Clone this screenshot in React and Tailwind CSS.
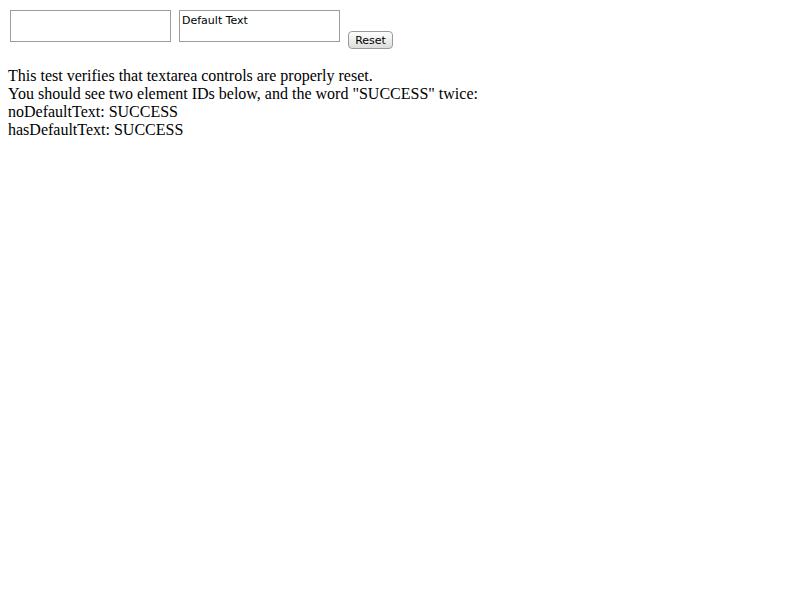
export default function App() {
  return (
    <div className="min-h-screen bg-white p-2 font-['Liberation_Serif',serif] text-black">
      {/* form row */}
      <div className="flex items-start">
        <textarea
          className="mt-[2px] ml-[2px] h-[32px] w-[161px] resize-none border border-[#9c9c9c] px-[2px] pt-[3px] pb-[1px] font-['DejaVu_Sans',sans-serif] text-[11px] leading-[13px] outline-none"
          defaultValue=""
        />
        <textarea
          className="mt-[2px] ml-[8px] h-[32px] w-[161px] resize-none border border-[#9c9c9c] px-[2px] pt-[3px] pb-[1px] font-['DejaVu_Sans',sans-serif] text-[11px] leading-[13px] outline-none"
          defaultValue="Default Text"
        />
        <button className="mt-[23px] ml-[8px] flex h-[18px] w-[45px] items-center justify-center rounded-[4px] border border-[#9a9a9a] bg-gradient-to-b from-white to-[#dcdcdc] font-['DejaVu_Sans',sans-serif] text-[11px] leading-none text-black">
          Reset
        </button>
      </div>

      {/* results */}
      <div className="mt-[18px] text-[16px] leading-[18px]">
        <div>This test verifies that textarea controls are properly reset.</div>
        <div>You should see two element IDs below, and the word "SUCCESS" twice:</div>
        <div>noDefaultText: SUCCESS</div>
        <div>hasDefaultText: SUCCESS</div>
      </div>
    </div>
  );
}
